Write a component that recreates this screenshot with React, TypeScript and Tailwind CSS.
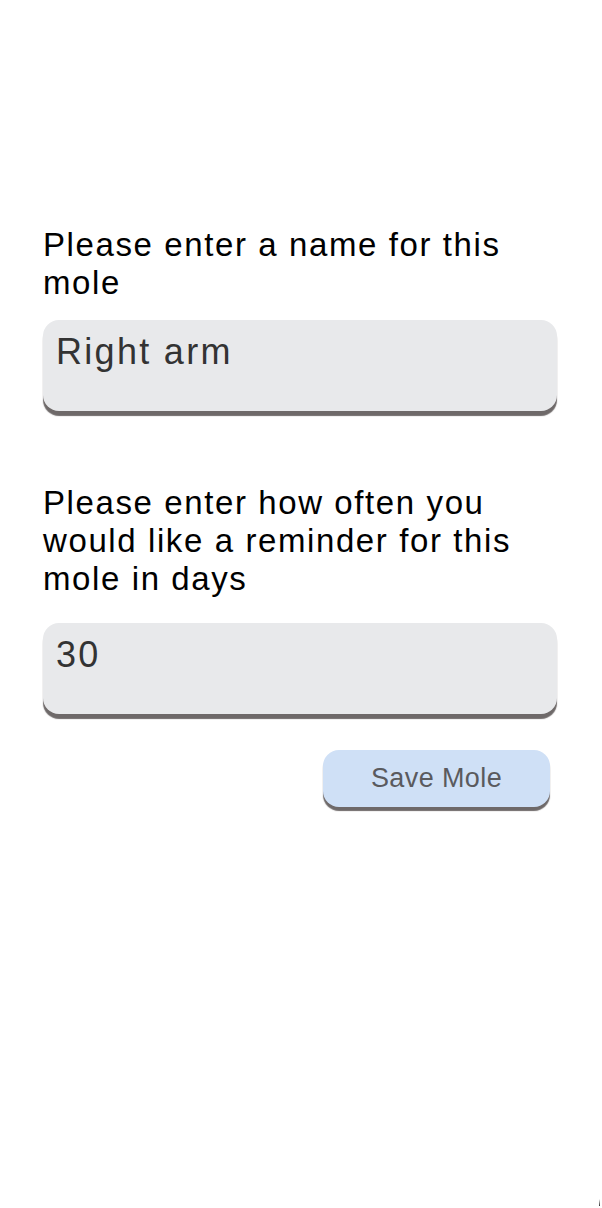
import React from 'react';

// Add-mole form: name + reminder interval
const labelClass = "text-[33px] leading-[38px] tracking-[1.6px] text-black";
const fieldClass =
  "block w-full h-[91px] rounded-[16px] bg-[#e8e9eb] pl-[13px] pt-[12px] pb-[39px] text-[36px] leading-[40px] tracking-[2.3px] text-[#333333] outline-none shadow-[0_5px_1px_0_#6e6969]";

export default function App() {
  return (
    <div className="relative min-h-[1208px] bg-white font-['Liberation_Sans',Arial,sans-serif]">
      <div className="pt-[226px] pl-[43px] pr-[45px]">
        {/* Name */}
        <p className={labelClass}>Please enter a name for this mole</p>
        <input readOnly value="Right arm" className={`mt-[18px] ${fieldClass}`} />

        {/* Reminder */}
        <p className={`mt-[73px] ${labelClass}`}>
          Please enter how often you would like a reminder for this mole in days
        </p>
        <input readOnly value="30" className={`mt-[25px] ${fieldClass}`} />

        {/* Save */}
        <div className="flex justify-end pr-[7px] mt-[36px]">
          <button className="w-[227px] h-[57px] rounded-[16px] bg-[#cfe0f6] text-[27px] tracking-[0.4px] text-[#5a5a5e] shadow-[0_4px_1px_0_#6e6969]">
            Save Mole
          </button>
        </div>
      </div>

      {/* scroll nub */}
      <div className="absolute right-[2px] bottom-[2px] w-[1px] h-[7px] bg-gradient-to-b from-white to-[#333]" />
    </div>
  );
}
